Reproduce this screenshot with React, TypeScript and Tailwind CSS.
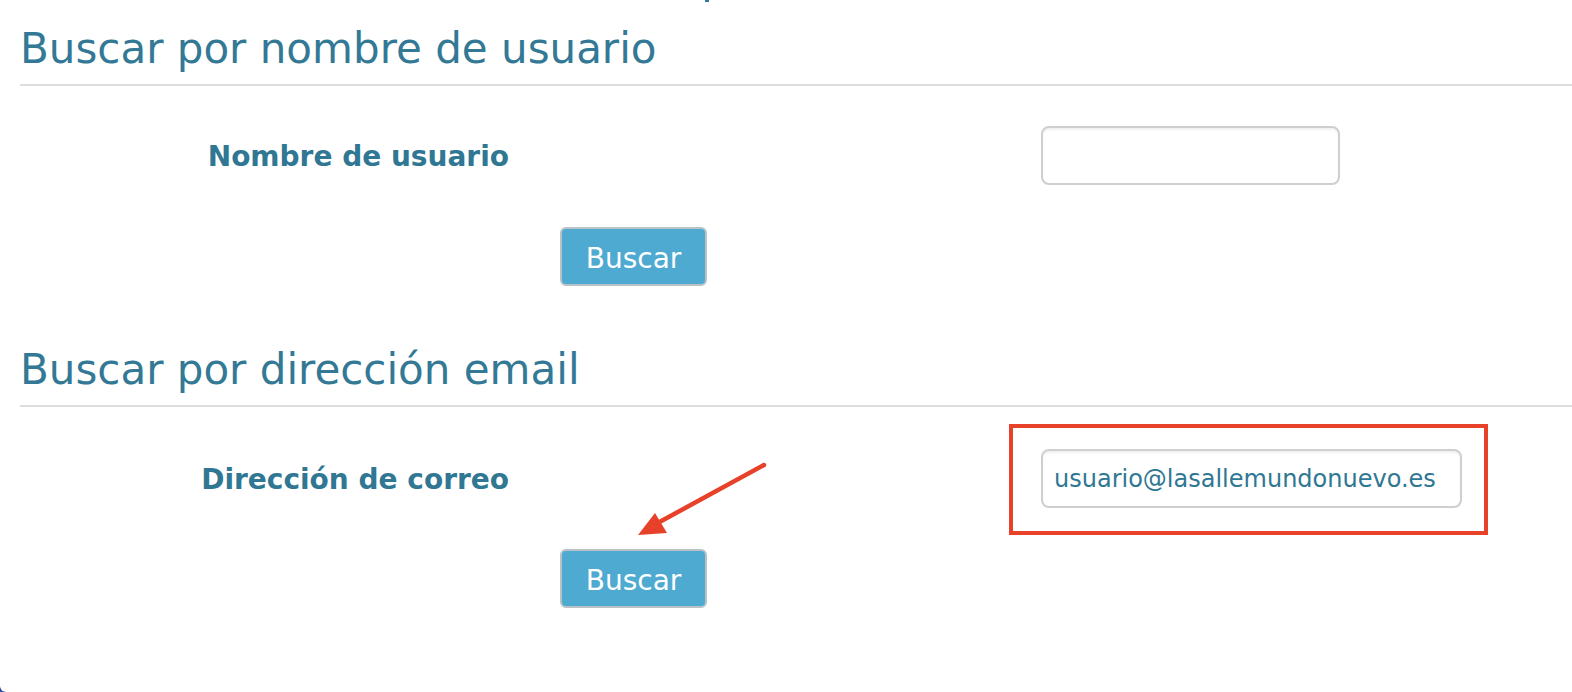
import React from "react";

const font = { fontFamily: '"DejaVu Sans", Verdana, sans-serif' };

function Heading({ children }: { children: React.ReactNode }) {
  return (
    <h2 className="text-[42px] leading-[48px] font-normal text-[#337995] pb-[11px] border-b-2 border-[#dddddd]">
      {children}
    </h2>
  );
}

function Row({
  label,
  inputWidth,
  value,
  topGap,
}: {
  label: string;
  inputWidth: string;
  value?: string;
  topGap: string;
}) {
  return (
    <div className={`grid grid-cols-[489px_1fr] ${topGap}`}>
      <div className="flex items-center justify-end text-[28px] leading-[34px] font-bold text-[#2f7793] pt-[3px]">
        {label}
      </div>
      <div className="pl-[532px]">
        <div
          className={`${inputWidth} h-[59px] rounded-[8px] border-2 border-[#cfcfcf] bg-white shadow-[inset_0_2px_2px_rgba(0,0,0,0.06)] flex items-center pl-[11px] text-[24px] text-[#2f7793]`}
        >
          {value}
        </div>
      </div>
    </div>
  );
}

function SubmitButton({ topGap }: { topGap: string }) {
  return (
    <div className={`grid grid-cols-[489px_1fr] ${topGap}`}>
      <div />
      <div className="pl-[51px]">
        <button className="w-[147px] h-[59px] rounded-[6px] border-2 border-[#b8c2c7] bg-[#4eaad1] text-white text-[28px] leading-none flex items-center justify-center pt-[4px]">
          Buscar
        </button>
      </div>
    </div>
  );
}

export default function App() {
  return (
    <div className="min-h-[692px] bg-[#2a4aa8]" style={font}>
      <div className="relative min-h-[692px] bg-white rounded-bl-[6px] pl-[20px] pt-[25px] overflow-hidden">
        <span className="absolute left-[705px] top-0 w-[4px] h-[2px] bg-[#337995]" />

        <Heading>Buscar por nombre de usuario</Heading>
        <Row label="Nombre de usuario" inputWidth="w-[299px]" topGap="mt-[40px]" />
        <SubmitButton topGap="mt-[42px]" />

        <div className="mt-[60px]">
          <Heading>Buscar por dirección email</Heading>
        </div>
        <Row
          label="Dirección de correo"
          inputWidth="w-[421px]"
          value="usuario@lasallemundonuevo.es"
          topGap="mt-[42px]"
        />
        <SubmitButton topGap="mt-[41px]" />

        {/* annotation: red box */}
        <div className="absolute left-[1009px] top-[424px] w-[479px] h-[111px] border-[4px] border-[#e8412a]" />

        {/* annotation: arrow */}
        <svg
          className="absolute left-0 top-0 pointer-events-none"
          width="1572"
          height="692"
          viewBox="0 0 1572 692"
        >
          <line x1="764" y1="465" x2="654" y2="525" stroke="#e8412a" strokeWidth="4.5" strokeLinecap="round" />
          <polygon points="638,535 655,513 667,533" fill="#e8412a" />
        </svg>
      </div>
    </div>
  );
}
